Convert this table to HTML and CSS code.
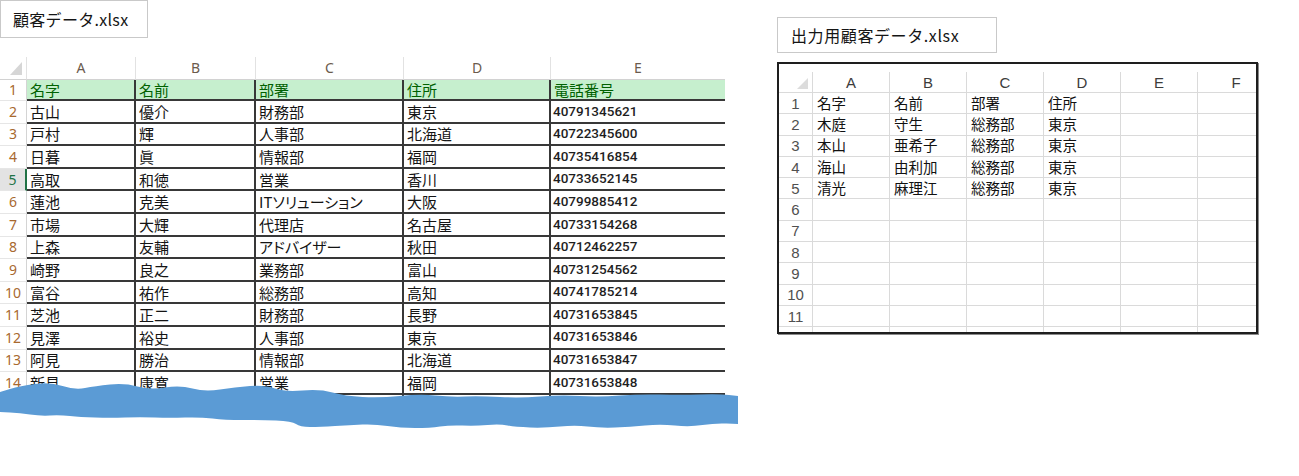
FILE: index.html
```html
<!DOCTYPE html>
<html lang="ja">
<head>
<meta charset="utf-8">
<title>顧客データ</title>
<link rel="stylesheet" href="styles.css">
</head>
<body>
<div class="page">
  <section class="pane-left">
    <div class="title t1">顧客データ.xlsx</div>
    <div class="sheet-area">
      <div class="sheet-clip">
        <div class="grid-a">
          <div class="ch corner"><span class="tri"></span></div>
          <div class="ch">A</div><div class="ch">B</div><div class="ch">C</div><div class="ch">D</div><div class="ch lastc">E</div>

          <div class="rh">1</div>
          <div class="c hd">名字</div><div class="c hd">名前</div><div class="c hd">部署</div><div class="c hd">住所</div><div class="c hd last">電話番号</div>

          <div class="rh">2</div>
          <div class="c">古山</div><div class="c">優介</div><div class="c">財務部</div><div class="c">東京</div><div class="c num last">40791345621</div>

          <div class="rh">3</div>
          <div class="c">戸村</div><div class="c">輝</div><div class="c">人事部</div><div class="c">北海道</div><div class="c num last">40722345600</div>

          <div class="rh">4</div>
          <div class="c">日暮</div><div class="c">眞</div><div class="c">情報部</div><div class="c">福岡</div><div class="c num last">40735416854</div>

          <div class="rh sel">5</div>
          <div class="c">高取</div><div class="c">和徳</div><div class="c">営業</div><div class="c">香川</div><div class="c num last">40733652145</div>

          <div class="rh">6</div>
          <div class="c">蓮池</div><div class="c">克美</div><div class="c palt">ITソリューション</div><div class="c">大阪</div><div class="c num last">40799885412</div>

          <div class="rh">7</div>
          <div class="c">市場</div><div class="c">大輝</div><div class="c">代理店</div><div class="c">名古屋</div><div class="c num last">40733154268</div>

          <div class="rh">8</div>
          <div class="c">上森</div><div class="c">友輔</div><div class="c palt">アドバイザー</div><div class="c">秋田</div><div class="c num last">40712462257</div>

          <div class="rh">9</div>
          <div class="c">崎野</div><div class="c">良之</div><div class="c">業務部</div><div class="c">富山</div><div class="c num last">40731254562</div>

          <div class="rh">10</div>
          <div class="c">富谷</div><div class="c">祐作</div><div class="c">総務部</div><div class="c">高知</div><div class="c num last">40741785214</div>

          <div class="rh">11</div>
          <div class="c">芝池</div><div class="c">正二</div><div class="c">財務部</div><div class="c">長野</div><div class="c num last">40731653845</div>

          <div class="rh">12</div>
          <div class="c">見澤</div><div class="c">裕史</div><div class="c">人事部</div><div class="c">東京</div><div class="c num last">40731653846</div>

          <div class="rh">13</div>
          <div class="c">阿見</div><div class="c">勝治</div><div class="c">情報部</div><div class="c">北海道</div><div class="c num last">40731653847</div>

          <div class="rh">14</div>
          <div class="c">新見</div><div class="c">康寛</div><div class="c">営業</div><div class="c">福岡</div><div class="c num last">40731653848</div>

          <div class="rh"></div>
          <div class="c"></div><div class="c"></div><div class="c"></div><div class="c"></div><div class="c num last"></div>
        </div>
      </div>
      <svg class="scribble" width="740" height="56" viewBox="0 0 740 56" aria-hidden="true">
        <path fill="#5b9bd5" d="M0 15 L10 12 Q20 9 35 7 Q50 5 62.5 9 Q75 13 85 11 Q95 9 110 7.5 Q125 6 137.5 9.5 Q150 13 165 10.5 Q180 8 192.5 11.5 Q205 15 220 12.5 Q235 10 250 9 Q265 8 275 11.5 Q285 15 302.5 13.5 Q320 12 332.5 15.5 Q345 19 362.5 20 Q380 21 400 19 Q420 17 435 18.5 Q450 20 465 19.5 Q480 19 500 20 Q520 21 540 19.5 Q560 18 580 19 Q600 20 620 18.5 Q640 17 660 17.5 Q680 18 700 17.5 Q720 17 729 18 L738 19 L738 47 L726.5 46.5 Q715 46 702.5 48 Q690 50 675 48.5 Q660 47 645 48.5 Q630 50 615 50.5 Q600 51 587.5 49.5 Q575 48 560 49.5 Q545 51 530 50.5 Q515 50 507.5 48.5 Q500 47 487.5 48 Q475 49 462.5 48.5 Q450 48 440 49.5 Q430 51 415 51 Q400 51 387.5 49 Q375 47 362.5 47.5 Q350 48 335 49 Q320 50 310 50 Q300 50 296 47 Q292 44 276 43.5 Q260 43 242.5 43 Q225 43 212.5 41.5 Q200 40 185 40.5 Q170 41 155 40.5 Q140 40 125 40.5 Q110 41 95 40.5 Q80 40 70 39 Q60 38 50 38.5 Q40 39 30 37.5 Q20 36 10 35.5 L0 35 Z"/>
      </svg>
    </div>
  </section>

  <section class="pane-right">
    <div class="title t2">出力用顧客データ.xlsx</div>
    <div class="frame">
      <div class="grid-b">
        <div class="bh corner"><span class="tri"></span></div>
        <div class="bh">A</div><div class="bh">B</div><div class="bh">C</div><div class="bh">D</div><div class="bh">E</div><div class="bh">F</div>

        <div class="br">1</div><div class="bc">名字</div><div class="bc">名前</div><div class="bc">部署</div><div class="bc">住所</div><div class="bc"></div><div class="bc"></div>
        <div class="br">2</div><div class="bc">木庭</div><div class="bc">守生</div><div class="bc">総務部</div><div class="bc">東京</div><div class="bc"></div><div class="bc"></div>
        <div class="br">3</div><div class="bc">本山</div><div class="bc">亜希子</div><div class="bc">総務部</div><div class="bc">東京</div><div class="bc"></div><div class="bc"></div>
        <div class="br">4</div><div class="bc">海山</div><div class="bc">由利加</div><div class="bc">総務部</div><div class="bc">東京</div><div class="bc"></div><div class="bc"></div>
        <div class="br">5</div><div class="bc">清光</div><div class="bc">麻理江</div><div class="bc">総務部</div><div class="bc">東京</div><div class="bc"></div><div class="bc"></div>
        <div class="br">6</div><div class="bc"></div><div class="bc"></div><div class="bc"></div><div class="bc"></div><div class="bc"></div><div class="bc"></div>
        <div class="br">7</div><div class="bc"></div><div class="bc"></div><div class="bc"></div><div class="bc"></div><div class="bc"></div><div class="bc"></div>
        <div class="br">8</div><div class="bc"></div><div class="bc"></div><div class="bc"></div><div class="bc"></div><div class="bc"></div><div class="bc"></div>
        <div class="br">9</div><div class="bc"></div><div class="bc"></div><div class="bc"></div><div class="bc"></div><div class="bc"></div><div class="bc"></div>
        <div class="br">10</div><div class="bc"></div><div class="bc"></div><div class="bc"></div><div class="bc"></div><div class="bc"></div><div class="bc"></div>
        <div class="br">11</div><div class="bc"></div><div class="bc"></div><div class="bc"></div><div class="bc"></div><div class="bc"></div><div class="bc"></div>
        <div class="br"></div><div class="bc"></div><div class="bc"></div><div class="bc"></div><div class="bc"></div><div class="bc"></div><div class="bc"></div>
      </div>
    </div>
  </section>
</div>
</body>
</html>
```

FILE: styles.css
```css
html, body {
  margin: 0;
  padding: 0;
  background: #ffffff;
}

body {
  min-height: 476px;
  font-family: "Noto Sans CJK JP", "Noto Sans", sans-serif;
  color: #111111;
}

.page {
  display: flex;
  align-items: flex-start;
  min-height: 476px;
}

/* ---------- file name labels ---------- */
.title {
  box-sizing: border-box;
  border: 1px solid #c9c9c9;
  display: flex;
  align-items: center;
  font-size: 16px;
  line-height: 1;
  color: #151515;
  white-space: nowrap;
}

.t1 {
  width: 148px;
  height: 38px;
  padding-left: 12px;
  letter-spacing: 0.3px;
}

.t2 {
  width: 220px;
  height: 36px;
  padding-left: 13px;
  margin-top: 17px;
  letter-spacing: 0.6px;
}

/* ---------- left sheet ---------- */
.pane-left {
  width: 738px;
  flex: none;
}

.sheet-area {
  position: relative;
  margin-top: 19px;
  height: 390px;
}

.sheet-clip {
  height: 348px;
  overflow: hidden;
}

.grid-a {
  display: grid;
  grid-template-columns: 27px 109px 120px 148px 147px 174px;
  grid-template-rows: 23px 21px;
  grid-auto-rows: 22.6px;
  width: 725px;
}

.grid-a > div {
  box-sizing: border-box;
  display: flex;
  align-items: center;
  white-space: nowrap;
  overflow: hidden;
  line-height: 1;
}

.ch {
  justify-content: center;
  border-right: 1px solid #e2e2e2;
  border-bottom: 1px solid #d2d2d2;
  font-family: "Noto Sans", "Liberation Sans", sans-serif;
  font-size: 14px;
  color: #6b5b4d;
}

.ch.lastc {
  border-right: none;
}

.corner {
  justify-content: flex-end !important;
  align-items: flex-end !important;
  padding: 0 4px 4px 0;
}

.tri {
  display: block;
  width: 12px;
  height: 13px;
  background: #d6d6d6;
  clip-path: polygon(100% 0, 100% 100%, 0 100%);
}

.rh {
  justify-content: center;
  border-right: 1px solid #d4d4d4;
  border-bottom: 1px solid #e6e6e6;
  font-family: "Noto Sans", "Liberation Sans", sans-serif;
  font-size: 14px;
  color: #a8692f;
}

.rh.sel {
  background: #e3e3e3;
  color: #217346;
  border-right: 2px solid #217346;
}

.c {
  padding-left: 3px;
  border-right: 2px solid #383838;
  border-bottom: 2px solid #383838;
  font-size: 15px;
  color: #141414;
}

.c.palt {
  font-feature-settings: "palt" 1;
}

.c.last {
  border-right: none;
}

.c.hd {
  background: #c6efce;
  color: #006100;
}

.c.num {
  font-family: Roboto, "Liberation Sans", sans-serif;
  font-size: 13.5px;
  font-weight: 500;
  color: #1e1e1e;
  padding-left: 2px;
}

.scribble {
  position: absolute;
  left: 0;
  top: 320px;
  width: 740px;
  height: 56px;
  display: block;
  overflow: visible;
}

/* ---------- right sheet ---------- */
.pane-right {
  margin-left: 39px;
  flex: none;
}

.frame {
  box-sizing: border-box;
  margin-top: 9px;
  width: 481px;
  height: 272px;
  border: 2px solid #1e1e1e;
  padding-top: 8px;
  overflow: hidden;
  box-shadow: 1px 1px 0 #8a8a8a;
}

.grid-b {
  display: grid;
  grid-template-columns: 34px repeat(6, 77px);
  grid-template-rows: 21px;
  grid-auto-rows: 21.3px;
  width: 496px;
}

.grid-b > div {
  box-sizing: border-box;
  display: flex;
  align-items: center;
  white-space: nowrap;
  overflow: hidden;
  line-height: 1;
  border-right: 1px solid #dadada;
  border-bottom: 1px solid #dadada;
}

.bh {
  justify-content: center;
  font-family: "Liberation Sans", Arial, sans-serif;
  font-size: 15px;
  color: #3c3c3c;
}

.grid-b .corner {
  padding: 0 4px 3px 0;
}

.grid-b .tri {
  width: 11px;
  height: 11px;
  background: #dcdcdc;
}

.br {
  justify-content: center;
  font-family: "Liberation Sans", Arial, sans-serif;
  font-size: 15px;
  color: #505050;
}

.bc {
  padding-left: 4px;
  font-size: 14.5px;
  color: #111111;
}
```
